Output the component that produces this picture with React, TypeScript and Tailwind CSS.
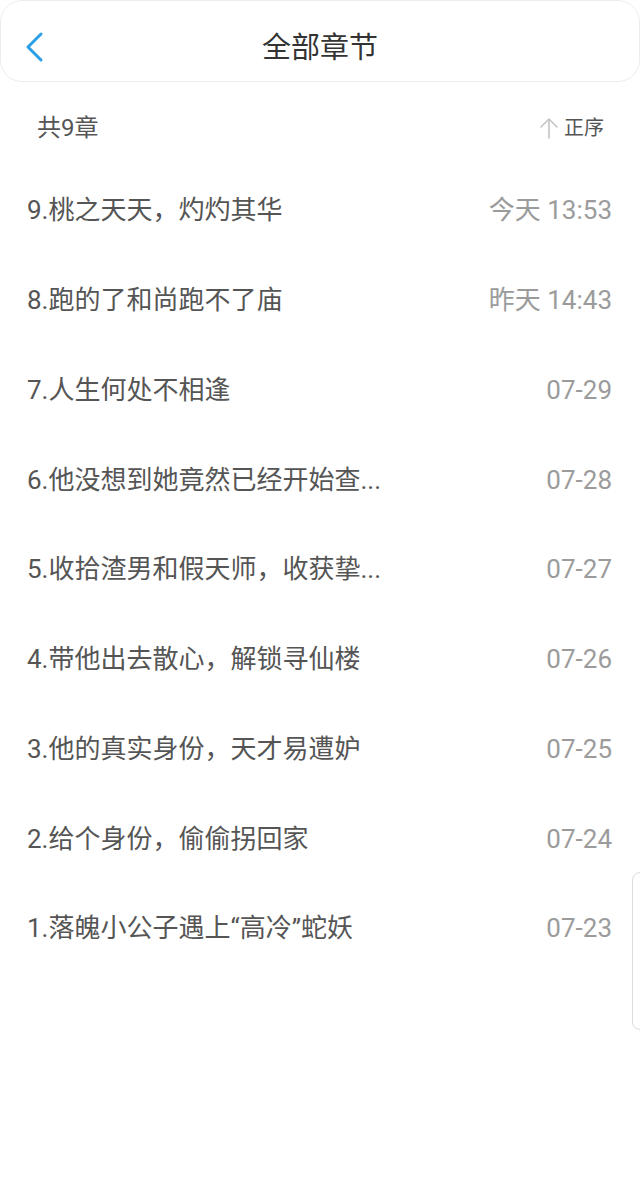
import { useState } from 'react';

interface Chapter {
  title: string;
  time: string;
}

const chapters: Chapter[] = [
  { title: '9.桃之天天，灼灼其华', time: '今天 13:53' },
  { title: '8.跑的了和尚跑不了庙', time: '昨天 14:43' },
  { title: '7.人生何处不相逢', time: '07-29' },
  { title: '6.他没想到她竟然已经开始查...', time: '07-28' },
  { title: '5.收拾渣男和假天师，收获挚...', time: '07-27' },
  { title: '4.带他出去散心，解锁寻仙楼', time: '07-26' },
  { title: '3.他的真实身份，天才易遭妒', time: '07-25' },
  { title: '2.给个身份，偷偷拐回家', time: '07-24' },
  { title: '1.落魄小公子遇上“高冷”蛇妖', time: '07-23' },
];

export default function App() {
  const [ascending, setAscending] = useState(false);

  const list = ascending ? [...chapters].reverse() : chapters;

  return (
    <main
      className="relative w-full h-[1194px] bg-white overflow-hidden"
      style={{ fontFamily: 'Roboto, "Noto Sans CJK SC", sans-serif' }}
    >
      {/* header card */}
      <header className="relative h-[82px] pt-[14px] flex items-center justify-center border border-[#ececec] rounded-[22px] bg-white">
        <button
          type="button"
          className="absolute left-[20px] top-[26px] p-1"
        >
          <svg width="22" height="32" viewBox="0 0 22 32" fill="none">
            <polyline
              points="16,3 3,16 16,29"
              stroke="#2b9fe6"
              strokeWidth="3"
              strokeLinecap="round"
              strokeLinejoin="round"
            />
          </svg>
        </button>
        <h1 className="text-[29px] text-[#333] leading-none">全部章节</h1>
      </header>

      {/* summary */}
      <div className="h-[84px] pt-2 pl-[37px] pr-[36px] flex items-center justify-between">
        <span className="text-[24px] text-[#555]">共9章</span>
        <button
          type="button"
          onClick={() => setAscending(!ascending)}
          className="flex items-center gap-[5px] text-[20px] text-[#555]"
        >
          <svg width="20" height="24" viewBox="0 0 20 24" fill="none">
            <path
              d="M10 22V3M2 11l8-8 8 8"
              stroke="#c4c4c4"
              strokeWidth="1.6"
              strokeLinecap="round"
              strokeLinejoin="round"
            />
          </svg>
          正序
        </button>
      </div>

      {/* chapter list */}
      <ul>
        {list.map((chapter) => (
          <li
            key={chapter.title}
            className="h-[89.75px] pl-[27px] pr-[28px] flex items-center justify-between"
          >
            <span className="text-[26px] text-[#555] whitespace-nowrap">
              {chapter.title}
            </span>
            <span className="text-[26px] text-[#9b9b9b] whitespace-nowrap">
              {chapter.time}
            </span>
          </li>
        ))}
      </ul>

      {/* side handle */}
      <div className="absolute right-[-10px] top-[872px] w-[18px] h-[158px] border border-[#dcdcdc] rounded-[8px] bg-white" />
    </main>
  );
}
